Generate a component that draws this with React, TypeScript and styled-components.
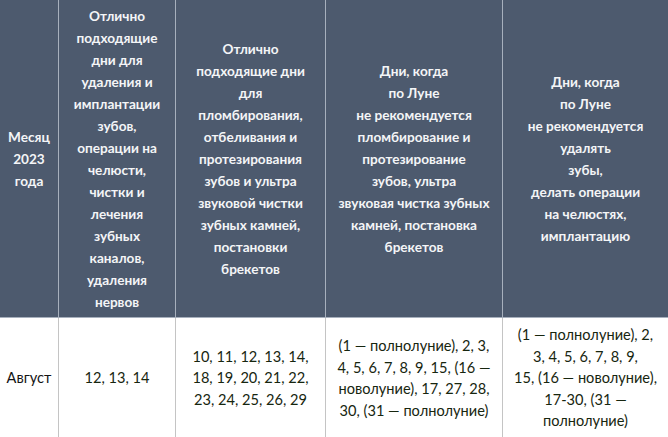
import React from 'react'
import styled, { createGlobalStyle } from 'styled-components'

const GlobalStyle = createGlobalStyle`
    html, body {
        margin: 0;
        padding: 0;
        background: #ffffff;
    }
    body {
        font-family: Lato, "Open Sans", sans-serif;
        overflow: hidden;
    }
`

const Wrapper = styled.div`
    width: 668px;
    height: 437px;
    overflow: hidden;
    background: #ffffff;
`

const Table = styled.table`
    margin-left: -1px;
    width: 669px;
    border-collapse: collapse;
    table-layout: fixed;
`

const HeadCell = styled.th`
    background: #4d5a6e;
    color: #f4f5f7;
    font-family: Lato, "Open Sans", sans-serif;
    font-weight: 700;
    font-size: 13.6px;
    line-height: 22px;
    height: 317px;
    padding: 0 2px;
    text-align: center;
    vertical-align: middle;
    white-space: nowrap;
    border: 1px solid #a7b0bd;
    border-top: none;
`

const BodyCell = styled.td<{ $label?: boolean }>`
    font-family: Lato, "Open Sans", sans-serif;
    font-size: 14.6px;
    line-height: 21.5px;
    color: ${p => (p.$label ? '#141414' : '#17260f')};
    height: 120px;
    padding: 0 2px;
    text-align: center;
    vertical-align: middle;
    white-space: nowrap;
    border: 1px solid #c4c4c4;
`

const Lines = ({ items }: { items: string[] }) => (
    <>
        {items.map((line, i) => (
            <React.Fragment key={i}>
                {line}
                {i < items.length - 1 && <br />}
            </React.Fragment>
        ))}
    </>
)

const widths = [59, 117, 150, 177, 166]

const headers: string[][] = [
    ['Месяц', '2023', 'года'],
    ['Отлично', 'подходящие', 'дни для', 'удаления и', 'имплантации', 'зубов,', 'операции на', 'челюсти,', 'чистки и', 'лечения', 'зубных', 'каналов,', 'удаления', 'нервов'],
    ['Отлично', 'подходящие дни', 'для', 'пломбирования,', 'отбеливания и', 'протезирования', 'зубов и ультра', 'звуковой чистки', 'зубных камней,', 'постановки', 'брекетов'],
    ['Дни, когда', 'по Луне', 'не рекомендуется', 'пломбирование и', 'протезирование', 'зубов, ультра', 'звуковая чистка зубных', 'камней, постановка', 'брекетов'],
    ['Дни, когда', 'по Луне', 'не рекомендуется', 'удалять', 'зубы,', 'делать операции', 'на челюстях,', 'имплантацию'],
]

const row: string[][] = [
    ['Август'],
    ['12, 13, 14'],
    ['10, 11, 12, 13, 14,', '18, 19, 20, 21, 22,', '23, 24, 25, 26, 29'],
    ['(1 — полнолуние), 2, 3,', '4, 5, 6, 7, 8, 9, 15, (16 —', 'новолуние), 17, 27, 28,', '30, (31 — полнолуние)'],
    ['(1 — полнолуние), 2,', '3, 4, 5, 6, 7, 8, 9,', '15, (16 — новолуние),', '17-30, (31 —', 'полнолуние)'],
]

const App = () => {
    return (
        <Wrapper>
            <GlobalStyle />
            <Table>
                <colgroup>
                    {widths.map((w, i) => <col key={i} style={{ width: w }} />)}
                </colgroup>
                <thead>
                    <tr>
                        {headers.map((h, i) => <HeadCell key={i}><Lines items={h} /></HeadCell>)}
                    </tr>
                </thead>
                <tbody>
                    <tr>
                        {row.map((c, i) => <BodyCell key={i} $label={i === 0}><Lines items={c} /></BodyCell>)}
                    </tr>
                </tbody>
            </Table>
        </Wrapper>
    )
}

export default App
